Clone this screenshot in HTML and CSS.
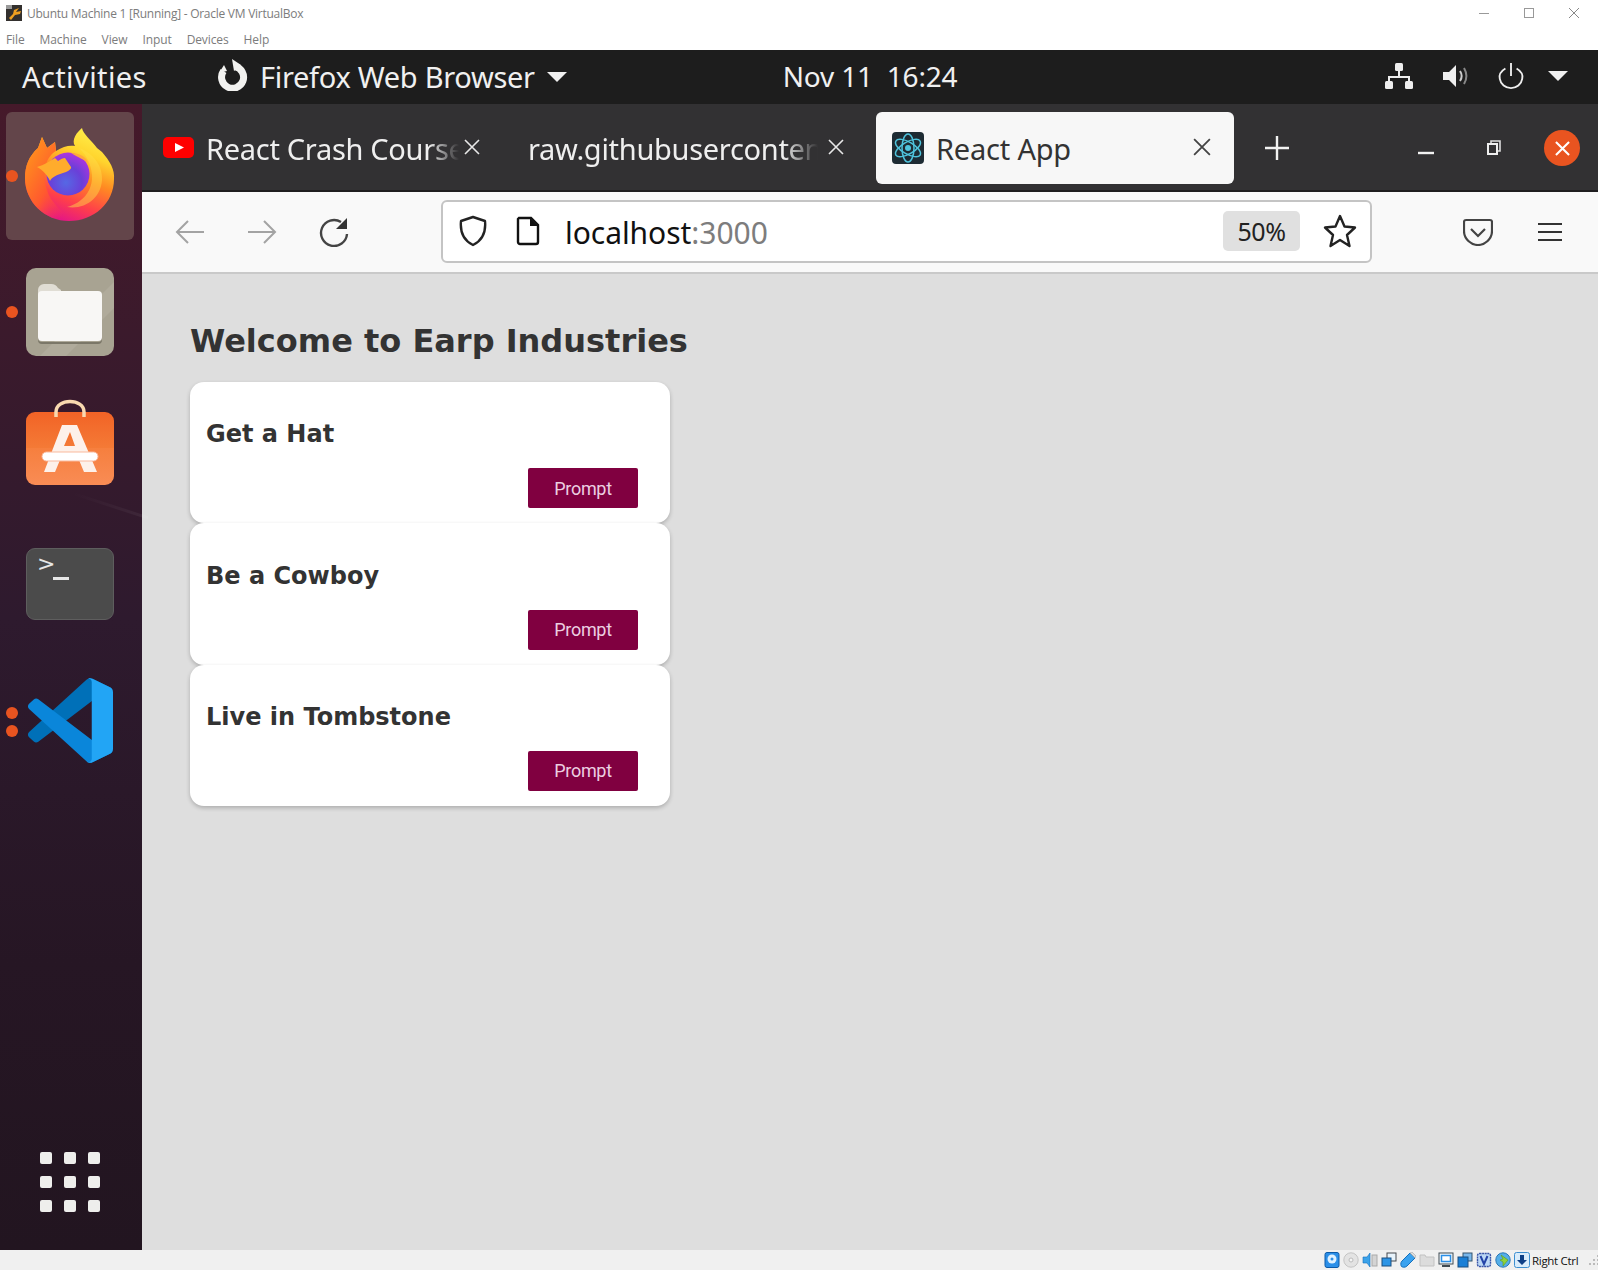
FILE: index.html
```html
<!DOCTYPE html>
<html lang="en">
<head>
<meta charset="utf-8">
<title>Ubuntu Machine 1 [Running] - Oracle VM VirtualBox</title>
<link rel="stylesheet" href="styles.css">
</head>
<body>
<div class="vbox">
  <header class="vb-title">
    <svg class="vb-logo" viewBox="0 0 16 16"><rect width="16" height="16" fill="#33302e"/><rect x="0" y="0" width="6" height="4" fill="#9a9a9a"/><path d="M3 13 L7 9 L8 5 L13 3 L10 7 L15 6 L14 9 L9 10 L5 15 Z" fill="#f0a020"/></svg>
    <span class="vb-title-text">Ubuntu Machine 1 [Running] - Oracle VM VirtualBox</span>
    <div class="vb-winctl">
      <svg viewBox="0 0 12 12"><path d="M1 6.5H11" stroke="#999" fill="none"/></svg>
      <svg viewBox="0 0 12 12"><rect x="1.5" y="1.5" width="9" height="9" stroke="#999" fill="none"/></svg>
      <svg viewBox="0 0 12 12"><path d="M1 1L11 11M11 1L1 11" stroke="#888" fill="none"/></svg>
    </div>
  </header>
  <nav class="vb-menu">
    <span>File</span><span>Machine</span><span>View</span><span>Input</span><span>Devices</span><span>Help</span>
  </nav>

  <div class="gnome-bar">
    <span class="activities">Activities</span>
    <div class="app-menu">
      <svg class="app-icon" viewBox="0 0 32 32"><path d="M18 7.500A11 11 0 1 1 6.500 12" stroke="#f2f2f0" stroke-width="7" fill="none"/><path d="M15 0L24 6L17 12Z" fill="#f2f2f0"/><path d="M2 14L7 6L10 12Z" fill="#f2f2f0"/></svg>
      <span class="app-name">Firefox Web Browser</span>
      <span class="caret caret-lg"></span>
    </div>
    <div class="clock"><span>Nov 11</span><span>16:24</span></div>
    <div class="tray">
      <svg class="tray-net" viewBox="0 0 30 30"><rect x="11" y="2" width="8" height="8" rx="1.5" fill="#eee"/><rect x="1" y="20" width="8" height="8" rx="1.5" fill="#eee"/><rect x="21" y="20" width="8" height="8" rx="1.5" fill="#eee"/><path d="M15 10V16M5 20V16H25V20" stroke="#eee" stroke-width="2" fill="none"/></svg>
      <svg class="tray-vol" viewBox="0 0 30 30"><path d="M2 11H8L15 4V26L8 19H2Z" fill="#eee"/><path d="M19 10C21 13 21 17 19 20" stroke="#ccc" stroke-width="2" fill="none"/><path d="M23 7C26 12 26 18 23 23" stroke="#888" stroke-width="2" fill="none"/></svg>
      <svg class="tray-pow" viewBox="0 0 30 30"><path d="M9 7C4 10 2 14 3 18C4 24 9 28 15 28C21 28 26 24 27 18C28 14 26 10 21 7" stroke="#eee" stroke-width="2" fill="none"/><path d="M15 1V15" stroke="#eee" stroke-width="2"/></svg>
      <span class="caret"></span>
    </div>
  </div>

  <div class="desktop">
    <aside class="dock">
      <div class="dock-slot is-active">
        <span class="run-dot"></span>
        <svg class="ico-firefox" viewBox="0 0 90 93">
          <defs>
            <linearGradient id="ffBody" x1="0.8" y1="0" x2="0.4" y2="1">
              <stop offset="0" stop-color="#fff44f"/><stop offset="0.28" stop-color="#ffd52e"/><stop offset="0.52" stop-color="#ff8a22"/><stop offset="0.78" stop-color="#ff3f4a"/><stop offset="1" stop-color="#e31587"/>
            </linearGradient>
            <radialGradient id="ffGlobe" cx="0.45" cy="0.7" r="0.75">
              <stop offset="0" stop-color="#5668e4"/><stop offset="0.5" stop-color="#6a3fd8"/><stop offset="1" stop-color="#b833e1"/>
            </radialGradient>
            <linearGradient id="ffLeft" x1="0.1" y1="0" x2="0.9" y2="0.9">
              <stop offset="0" stop-color="#ff9a1a"/><stop offset="0.6" stop-color="#ff5a2e"/><stop offset="1" stop-color="#ff3750" stop-opacity="0"/>
            </linearGradient>
          </defs>
          <path d="M57 0 C58 6 66 12 72 20 L77 24 C85 33 90 42 89 51 C89 75 69 93 44 93 C20 93 0 74 0 50 C0 38 4 28 13 20 L17 9 L22 20 L30 14 L31 23 C38 18 45 17 50 18 C46 12 52 4 57 0 Z" fill="url(#ffBody)"/>
          <path d="M13 20 L17 9 L22 20 L30 14 L31 23 C22 28 16 42 22 62 C26 76 38 82 44 93 C20 93 0 74 0 50 C0 38 4 28 13 20 Z" fill="url(#ffLeft)"/>
          <path d="M54 20 C66 24 78 36 77 52 C76 70 60 82 42 79 C58 75 68 62 67 47 C66 36 62 28 54 20 Z" fill="#ffe04a" opacity="0.45"/>
          <circle cx="43" cy="46" r="21.5" fill="url(#ffGlobe)"/>
          <path d="M12 39 C20 37 26 32 30 30 L33 33 C36 31 38 30 40 30 L46 39 C47 41 42 44 38 45 C32 47 27 49 25 53 C23 48 18 42 12 39 Z" fill="#ffac2c"/>
          <path d="M46 25 C54 25 62 29 63 35 C60 32 54 30 46 25 Z" fill="#ffa83a"/>
        </svg>
      </div>
      <div class="dock-slot">
        <span class="run-dot"></span>
        <svg class="ico-tile" viewBox="0 0 88 88">
          <rect width="88" height="88" rx="10" fill="#a8a392"/>
          <path d="M88 14 L14 88 H40 L88 40 Z" fill="#b0ab9b"/>
          <path d="M12 22 a6 6 0 0 1 6-6 H24 a8 8 0 0 1 8 4 L35 22 V40 H12 Z" fill="#e0ddd4"/>
          <rect x="12" y="23" width="64" height="50" rx="4" fill="#f8f7f5"/>
          <path d="M12 70 a4 4 0 0 0 4 4 H72 a4 4 0 0 0 4-4 V72 a4 4 0 0 1-4 4 H16 a4 4 0 0 1-4-4 Z" fill="#7b7768"/>
        </svg>
      </div>
      <div class="dock-slot slot-store">
        <svg class="ico-store" viewBox="0 0 88 104">
          <defs><linearGradient id="stBg" x1="0" y1="0" x2="0" y2="1"><stop offset="0" stop-color="#f26326"/><stop offset="0.49" stop-color="#f47a36"/><stop offset="0.49" stop-color="#f67f3e"/><stop offset="1" stop-color="#f98c55"/></linearGradient></defs>
          <rect y="16" width="88" height="73" rx="9" fill="url(#stBg)"/>
          <path d="M30 21 V16 C30 2 58 2 58 16 V21" stroke="#f9d9b0" stroke-width="3.500" fill="none"/>
          <path d="M36 29 H51 L71 76 H58 L53 64 H34 L29 76 H18 Z M38 50 H49 L44 36 Z" fill="#fdf1ea"/>
          <rect x="16" y="56" width="56" height="9" rx="4.500" fill="#fff" stroke="#f9b99d" stroke-width="1"/>
        </svg>
      </div>
      <div class="dock-slot">
        <div class="ico-term"><span class="term-prompt">&gt;</span><span class="term-cursor"></span></div>
      </div>
      <div class="dock-slot">
        <span class="run-dot dot-a"></span><span class="run-dot dot-b"></span>
        <svg class="ico-code" viewBox="0 0 100 100">
          <path d="M96.46 10.8L75.86.88C73.47-.27 70.62.21 68.75 2.08L1.3 63.58C-.52 65.24-.51 68.09 1.3 69.75L6.81 74.75C8.3 76.1 10.53 76.2 12.13 74.99L93.36 13.37C96.09 11.3 100 13.25 100 16.67V16.43C100 14.03 98.62 11.84 96.46 10.8Z" fill="#0070b8"/>
          <path d="M96.46 89.2L75.86 99.12C73.47 100.27 70.62 99.79 68.75 97.92L1.3 36.42C-.52 34.76-.51 31.91 1.3 30.25L6.81 25.25C8.3 23.9 10.53 23.8 12.13 25.01L93.36 86.63C96.09 88.7 100 86.75 100 83.33V83.57C100 85.97 98.62 88.16 96.46 89.2Z" fill="#0a86da"/>
          <path d="M75.86 99.13C73.47 100.27 70.62 99.79 68.75 97.92C71.06 100.22 75 98.59 75 95.33V4.67C75 1.41 71.06-.22 68.75 2.08C70.62.21 73.47-.27 75.86.87L96.46 10.78C98.62 11.82 100 14.01 100 16.41V83.59C100 85.99 98.62 88.18 96.46 89.22Z" fill="#22a5f5"/>
        </svg>
      </div>
      <div class="app-grid">
        <i></i><i></i><i></i><i></i><i></i><i></i><i></i><i></i><i></i>
      </div>
    </aside>

    <main class="firefox">
      <div class="tabbar">
        <div class="tab tab-bg tab-first">
          <svg class="fav-yt" viewBox="0 0 31 21"><rect width="31" height="21" rx="5" fill="#f00"/><path d="M12 6L21 10.5L12 15Z" fill="#fff"/></svg>
          <span class="tab-title">React Crash Course</span>
          <svg class="tab-x" viewBox="0 0 16 16"><path d="M1 1L15 15M15 1L1 15" stroke="#e8e8e8" stroke-width="1.6"/></svg>
        </div>
        <div class="tab tab-bg tab-second">
          <span class="tab-title">raw.githubusercontent.com</span>
          <svg class="tab-x" viewBox="0 0 16 16"><path d="M1 1L15 15M15 1L1 15" stroke="#e8e8e8" stroke-width="1.6"/></svg>
        </div>
        <div class="tab tab-active">
          <svg class="fav-react" viewBox="0 0 32 32"><rect width="32" height="32" rx="4" fill="#1d2b33"/><g fill="none" stroke="#4fc3dc" stroke-width="1.5"><ellipse cx="16" cy="16" rx="6" ry="14"/><ellipse cx="16" cy="16" rx="6" ry="14" transform="rotate(60 16 16)"/><ellipse cx="16" cy="16" rx="6" ry="14" transform="rotate(120 16 16)"/></g><circle cx="16" cy="16" r="3" fill="#4fc3dc"/></svg>
          <span class="tab-title-on">React App</span>
          <svg class="tab-x" viewBox="0 0 16 16"><path d="M1 1L15 15M15 1L1 15" stroke="#444" stroke-width="1.6"/></svg>
        </div>
        <svg class="tab-new" viewBox="0 0 26 26"><path d="M13 1V25M1 13H25" stroke="#f2f2f2" stroke-width="2.4"/></svg>
        <div class="win-ctl">
          <svg class="ctl-min" viewBox="0 0 18 18"><path d="M1 14H17" stroke="#f2f2f2" stroke-width="2.4"/></svg>
          <svg class="ctl-max" viewBox="0 0 18 18"><path d="M6 5V2H15V12H12" stroke="#ddd" stroke-width="1.6" fill="none"/><rect x="3" y="5" width="9" height="10" stroke="#eee" stroke-width="2" fill="none"/></svg>
          <span class="ctl-close"><svg viewBox="0 0 16 16"><path d="M1 1L15 15M15 1L1 15" stroke="#fff" stroke-width="2.2"/></svg></span>
        </div>
      </div>

      <div class="toolbar">
        <div class="nav-btns">
          <svg viewBox="0 0 30 26"><path d="M29 13H2M13 2L2 13L13 24" stroke="#a3a3a3" stroke-width="2" fill="none"/></svg>
          <svg viewBox="0 0 30 26"><path d="M1 13H28M17 2L28 13L17 24" stroke="#a3a3a3" stroke-width="2" fill="none"/></svg>
          <svg viewBox="0 0 30 30"><path d="M28 17A13 13 0 1 1 22 5" stroke="#444" stroke-width="2.400" fill="none"/><path d="M28 1V12H17Z" fill="#333"/></svg>
        </div>
        <div class="urlbar">
          <svg class="ico-shield" viewBox="0 0 28 32"><path d="M14 2L26 6C27 16 24 25 14 30C4 25 1 16 2 6Z" stroke="#222" stroke-width="2.400" fill="none" stroke-linejoin="round"/></svg>
          <svg class="ico-page" viewBox="0 0 24 30"><path d="M3 2H15L22 9V26A2 2 0 0 1 20 28H4A2 2 0 0 1 2 26V3Z" stroke="#111" stroke-width="2.400" fill="#fff"/><path d="M14 2V10H22Z" fill="#111"/></svg>
          <span class="url"><span class="url-host">localhost</span>:3000</span>
          <span class="zoom-pill">50%</span>
          <svg class="ico-star" viewBox="0 0 34 34"><path d="M17 2L21.500 12.500L32 13.500L24 21L26.500 32L17 26L7.500 32L10 21L2 13.500L12.500 12.500Z" stroke="#222" stroke-width="2.400" fill="none" stroke-linejoin="round"/></svg>
        </div>
        <div class="tool-right">
          <svg class="ico-pocket" viewBox="0 0 30 28"><path d="M3 2H27A2 2 0 0 1 29 4V13C29 21 22 27 15 27C8 27 1 21 1 13V4A2 2 0 0 1 3 2Z" stroke="#444" stroke-width="2.200" fill="none"/><path d="M8 11L15 18L22 11" stroke="#444" stroke-width="2.200" fill="none"/></svg>
          <svg class="ico-menu" viewBox="0 0 26 22"><path d="M1 3H25M1 11H25M1 19H25" stroke="#333" stroke-width="2.200"/></svg>
        </div>
      </div>

      <section class="page">
        <h1>Welcome to Earp Industries</h1>
        <div class="cards">
          <article class="card"><h3>Get a Hat</h3><button class="btn">Prompt</button></article>
          <article class="card"><h3>Be a Cowboy</h3><button class="btn">Prompt</button></article>
          <article class="card"><h3>Live in Tombstone</h3><button class="btn">Prompt</button></article>
        </div>
      </section>
    </main>
  </div>

  <footer class="statusbar">
    <svg viewBox="0 0 16 16"><rect x="1" y="0.500" width="14" height="15" rx="2" fill="#2b8fe8" stroke="#0c5aa8"/><circle cx="8" cy="7" r="4.500" fill="#dff1ff"/><circle cx="8" cy="7" r="1.500" fill="#2b8fe8"/></svg>
    <svg viewBox="0 0 16 16"><circle cx="8" cy="8" r="7.200" fill="#e3e3e3" stroke="#c4c4c4"/><circle cx="8" cy="8" r="2" fill="#f5f5f5" stroke="#bbb"/></svg>
    <svg viewBox="0 0 16 16"><path d="M1 5H5L8 1V15L5 11H1Z" fill="#3ba3ea" stroke="#1670bd" stroke-width="0.600"/><rect x="10" y="3" width="5" height="11" fill="#d4d4d4" stroke="#aaa"/></svg>
    <svg viewBox="0 0 16 16"><rect x="6" y="1" width="9" height="8" fill="#e8f3fb" stroke="#44494e"/><rect x="1" y="6" width="9" height="8" fill="#2d95e6" stroke="#1a4f80"/></svg>
    <svg viewBox="0 0 16 16"><path d="M10 1L15 6L7 14C5 16 2 15 1.500 14.500C1 14 0 11 2 9Z" fill="#3aa2ef" stroke="#1570bc"/><path d="M10 1L12 0L16 4L15 6Z" fill="#ddd" stroke="#999" stroke-width="0.500"/></svg>
    <svg viewBox="0 0 16 16"><path d="M1 3H6L7 5H15V14H1Z" fill="#dcdcdc" stroke="#c2c2c2"/></svg>
    <svg viewBox="0 0 16 16"><rect x="1" y="1" width="14" height="11" fill="#f2f8fc" stroke="#3f4a52"/><rect x="3.500" y="3.500" width="9" height="6" fill="#fff" stroke="#2b8fe8" stroke-width="1.500"/><path d="M4 14H12" stroke="#3f4a52" stroke-width="2"/></svg>
    <svg viewBox="0 0 16 16"><rect x="6" y="1" width="9" height="8" fill="#7ab8ec" stroke="#36556f"/><rect x="1" y="5" width="10" height="10" fill="#1a7fd6" stroke="#1a4f80"/></svg>
    <svg viewBox="0 0 16 16"><rect x="1.500" y="1.500" width="13" height="13" rx="2" fill="#bcd8f5" stroke="#3a55a8" stroke-width="1.400" stroke-dasharray="2 0.600"/><path d="M4.500 4L8 12L11.500 4" stroke="#2444a8" stroke-width="2" fill="none"/></svg>
    <svg viewBox="0 0 16 16"><circle cx="8" cy="8" r="7.200" fill="#55aee8" stroke="#2b78b5"/><path d="M6 3L13 8L8 14L8 10L5 8L8 7Z" fill="#8fd23a" stroke="#5c9b1f" stroke-width="0.600"/></svg>
    <svg viewBox="0 0 16 16"><rect x="0.500" y="0.500" width="15" height="15" rx="2" fill="#d9ecfb" stroke="#3d8fd0"/><path d="M6 3H10V8H13L8 13L3 8H6Z" fill="#0d3f86"/></svg>
    <span class="status-text">Right Ctrl</span>
    <svg class="grip" viewBox="0 0 11 11"><g fill="#bbb"><rect x="8" y="0" width="2" height="2"/><rect x="4" y="4" width="2" height="2"/><rect x="8" y="4" width="2" height="2"/><rect x="0" y="8" width="2" height="2"/><rect x="4" y="8" width="2" height="2"/><rect x="8" y="8" width="2" height="2"/></g></svg>
  </footer>
</div>
</body>
</html>
```

FILE: styles.css
```css
* { box-sizing: border-box; }
html, body { margin: 0; padding: 0; }
body { font-family: "Noto Sans", sans-serif; background: #fff; }
svg { display: block; flex: none; }

.vbox { width: 1598px; height: 1270px; display: flex; flex-direction: column; overflow: hidden; }

/* VirtualBox chrome */
.vb-title { height: 25px; flex: none; display: flex; align-items: center; padding: 1px 0 0 6px; background: #fff; }
.vb-logo { width: 16px; height: 16px; }
.vb-title-text { margin-left: 5px; font: 12px "Open Sans", sans-serif; color: #7c7c7c; letter-spacing: -0.26px; }
.vb-winctl { margin-left: auto; display: flex; gap: 33px; padding-right: 18px; }
.vb-winctl svg { width: 12px; height: 12px; }
.vb-menu { height: 25px; flex: none; display: flex; gap: 15px; align-items: center; padding: 3px 0 0 6px; background: #fff; font: 12px "Open Sans", sans-serif; color: #7c7c7c; letter-spacing: -0.1px; }

/* GNOME top bar */
.gnome-bar { height: 54px; flex: none; display: flex; align-items: center; background: #1d1d1d; color: #f0f0f0; position: relative; }
.activities { margin-left: 22px; margin-bottom: 1px; font-size: 29px; letter-spacing: 0.4px; width: 125px; white-space: nowrap; }
.app-menu { margin-left: 70px; display: flex; align-items: center; }
.app-icon { width: 32px; height: 32px; margin-bottom: 4px; }
.app-name { margin-left: 11px; margin-bottom: 1px; font-size: 29px; letter-spacing: -0.3px; white-space: nowrap; }
.caret { display: block; width: 0; height: 0; border-left: 10px solid transparent; border-right: 10px solid transparent; border-top: 10px solid #f0f0f0; }
.caret-lg { margin-left: 12px; }
.clock { margin-left: 216px; margin-bottom: 2px; display: flex; gap: 14px; font-size: 28px; white-space: nowrap; letter-spacing: -0.2px; }
.tray { margin-left: auto; padding-right: 30px; display: flex; align-items: center; margin-bottom: 2px; }
.tray-net { width: 30px; height: 30px; }
.tray-vol { width: 30px; height: 30px; margin-left: 27px; }
.tray-pow { width: 28px; height: 30px; margin-left: 26px; }
.tray .caret { margin-left: 23px; }

/* Desktop */
.desktop { flex: 1; min-height: 0; display: flex; }
.dock { width: 142px; flex: none; display: flex; flex-direction: column; padding-top: 4px; background: linear-gradient(180deg, #45192a 0, #3b1a2c 20%, #2e1a2e 45%, #261624 75%, #221520 100%); }
.dock-slot { height: 136px; flex: none; display: flex; align-items: center; justify-content: center; position: relative; }
.is-active::before { content: ""; position: absolute; left: 6px; top: 4px; width: 128px; height: 128px; border-radius: 6px; background: #63454a; }
.slot-store::after { content: ""; position: absolute; left: 70px; top: 124px; width: 80px; height: 3px; background: linear-gradient(90deg, transparent, rgba(255, 255, 255, 0.06)); transform: rotate(18deg); }
.run-dot { position: absolute; left: 6px; top: 62px; width: 12px; height: 12px; border-radius: 50%; background: #e95420; }
.dot-a { top: 55px; }
.dot-b { top: 73px; }
.ico-firefox { width: 90px; height: 93px; position: relative; margin: 0 0 4px -2px; }
.ico-tile { width: 88px; height: 88px; margin-left: -2px; }
.ico-store { width: 88px; height: 104px; margin-left: -2px; }
.ico-term { width: 88px; height: 72px; margin: 0 0 0 -2px; position: relative; border-radius: 9px; background: #4b4b4b; border: 1px solid #5e5e5e; }
.term-prompt { position: absolute; left: 10px; top: 2px; font: 22px "DejaVu Sans", sans-serif; color: #e6e6e6; }
.term-cursor { position: absolute; left: 26px; top: 28px; width: 16px; height: 3px; background: #e6e6e6; }
.ico-code { width: 85px; height: 85px; margin-left: -2px; }
.app-grid { margin-top: auto; margin-bottom: 38px; margin-left: 40px; display: grid; grid-template-columns: repeat(3, 12px); grid-auto-rows: 12px; gap: 12px; }
.app-grid i { background: #eeeeec; border-radius: 2px; }

/* Firefox */
.firefox { flex: 1; min-width: 0; display: flex; flex-direction: column; }
.tabbar { height: 88px; flex: none; display: flex; align-items: center; padding-top: 2px; background: #323133; border-bottom: 2px solid #1f1e20; position: relative; }
.tab { display: flex; align-items: center; flex: none; height: 72px; }
.tab-title { overflow: hidden; white-space: nowrap; font-size: 29px; color: #efefef; letter-spacing: -0.3px; -webkit-mask-image: linear-gradient(90deg, #000 88%, transparent); mask-image: linear-gradient(90deg, #000 88%, transparent); }
.tab-x { width: 16px; height: 16px; margin-bottom: 2px; }
.tab-first { width: 338px; padding-left: 21px; }
.fav-yt { width: 31px; height: 21px; margin-bottom: 1px; }
.tab-first .tab-title { width: 253px; margin-left: 12px; }
.tab-first .tab-x { margin-left: 5px; }
.tab-second { width: 396px; padding-left: 48px; }
.tab-second .tab-title { width: 290px; }
.tab-second .tab-x { margin-left: 10px; }
.tab-active { width: 358px; height: 72px; padding-left: 16px; background: #f7f7f7; border-radius: 6px; }
.fav-react { width: 32px; height: 32px; }
.tab-title-on { margin-left: 12px; font-size: 29px; color: #333; letter-spacing: -0.2px; white-space: nowrap; width: 257px; }
.tab-active .tab-x { width: 18px; height: 18px; }
.tab-new { width: 26px; height: 26px; margin-left: 30px; }
.win-ctl { margin-left: auto; padding-right: 18px; display: flex; align-items: center; }
.ctl-min { width: 18px; height: 18px; }
.ctl-max { width: 18px; height: 18px; margin-left: 50px; }
.ctl-close { width: 36px; height: 36px; margin-left: 41px; border-radius: 50%; background: #e95420; display: flex; align-items: center; justify-content: center; }
.ctl-close svg { width: 15px; height: 15px; }

.toolbar { height: 82px; flex: none; display: flex; align-items: center; background: #f9f9f9; border-bottom: 2px solid #c9c9c9; }
.nav-btns { display: flex; align-items: center; gap: 42px; padding-left: 33px; width: 299px; }
.nav-btns svg { width: 30px; height: 30px; }
.urlbar { width: 931px; height: 63px; margin-bottom: 2px; display: flex; align-items: center; background: #fff; border: 2px solid #c4c4c4; border-radius: 6px; }
.ico-shield { width: 28px; height: 32px; margin-left: 16px; }
.ico-page { width: 24px; height: 30px; margin-left: 29px; }
.url { margin-left: 25px; padding-top: 2px; font-size: 30px; color: #7d7d7d; letter-spacing: -0.05px; white-space: nowrap; }
.url-host { color: #111; }
.zoom-pill { margin-left: auto; width: 77px; height: 40px; display: flex; align-items: center; justify-content: center; background: #e0e0e0; border-radius: 5px; font-size: 25px; color: #222; letter-spacing: -0.5px; }
.ico-star { width: 34px; height: 34px; margin: 0 13px 0 23px; }
.tool-right { display: flex; align-items: center; padding-left: 91px; }
.ico-pocket { width: 30px; height: 28px; }
.ico-menu { width: 26px; height: 22px; margin-left: 44px; }

/* Page content */
.page { flex: 1; min-height: 0; padding: 47px 0 0 48px; background: #dedede; color: #333; font-family: "DejaVu Sans", sans-serif; }
.page h1 { margin: 0 0 20px; font-size: 32px; line-height: 41px; font-weight: 700; white-space: nowrap; }
.cards { width: 480px; display: flex; flex-direction: column; }
.card { height: 141.33px; padding: 27.4px 32px 0 16px; display: flex; flex-direction: column; background: #fff; border-radius: 14px; box-shadow: 0 2px 4px rgba(0, 0, 0, 0.22); }
.card h3 { margin: 0; font-size: 24px; line-height: 50px; font-weight: 700; }
.btn { width: 110px; height: 40px; margin: 8.8px 0 0 auto; padding: 0; border: 0; border-radius: 2px; background: #800040; color: #eccfe0; font: 18px Roboto, sans-serif; letter-spacing: -0.3px; }

/* Status bar */
.statusbar { height: 20px; flex: none; display: flex; align-items: center; gap: 3px; padding-left: 1324px; background: #f0f0f0; }
.statusbar svg { width: 16px; height: 16px; }
.status-text { margin-left: -1px; font: 11.5px "Open Sans", sans-serif; color: #111; letter-spacing: -0.3px; white-space: nowrap; }
.statusbar .grip { width: 11px; height: 11px; margin-left: 8px; }
```
